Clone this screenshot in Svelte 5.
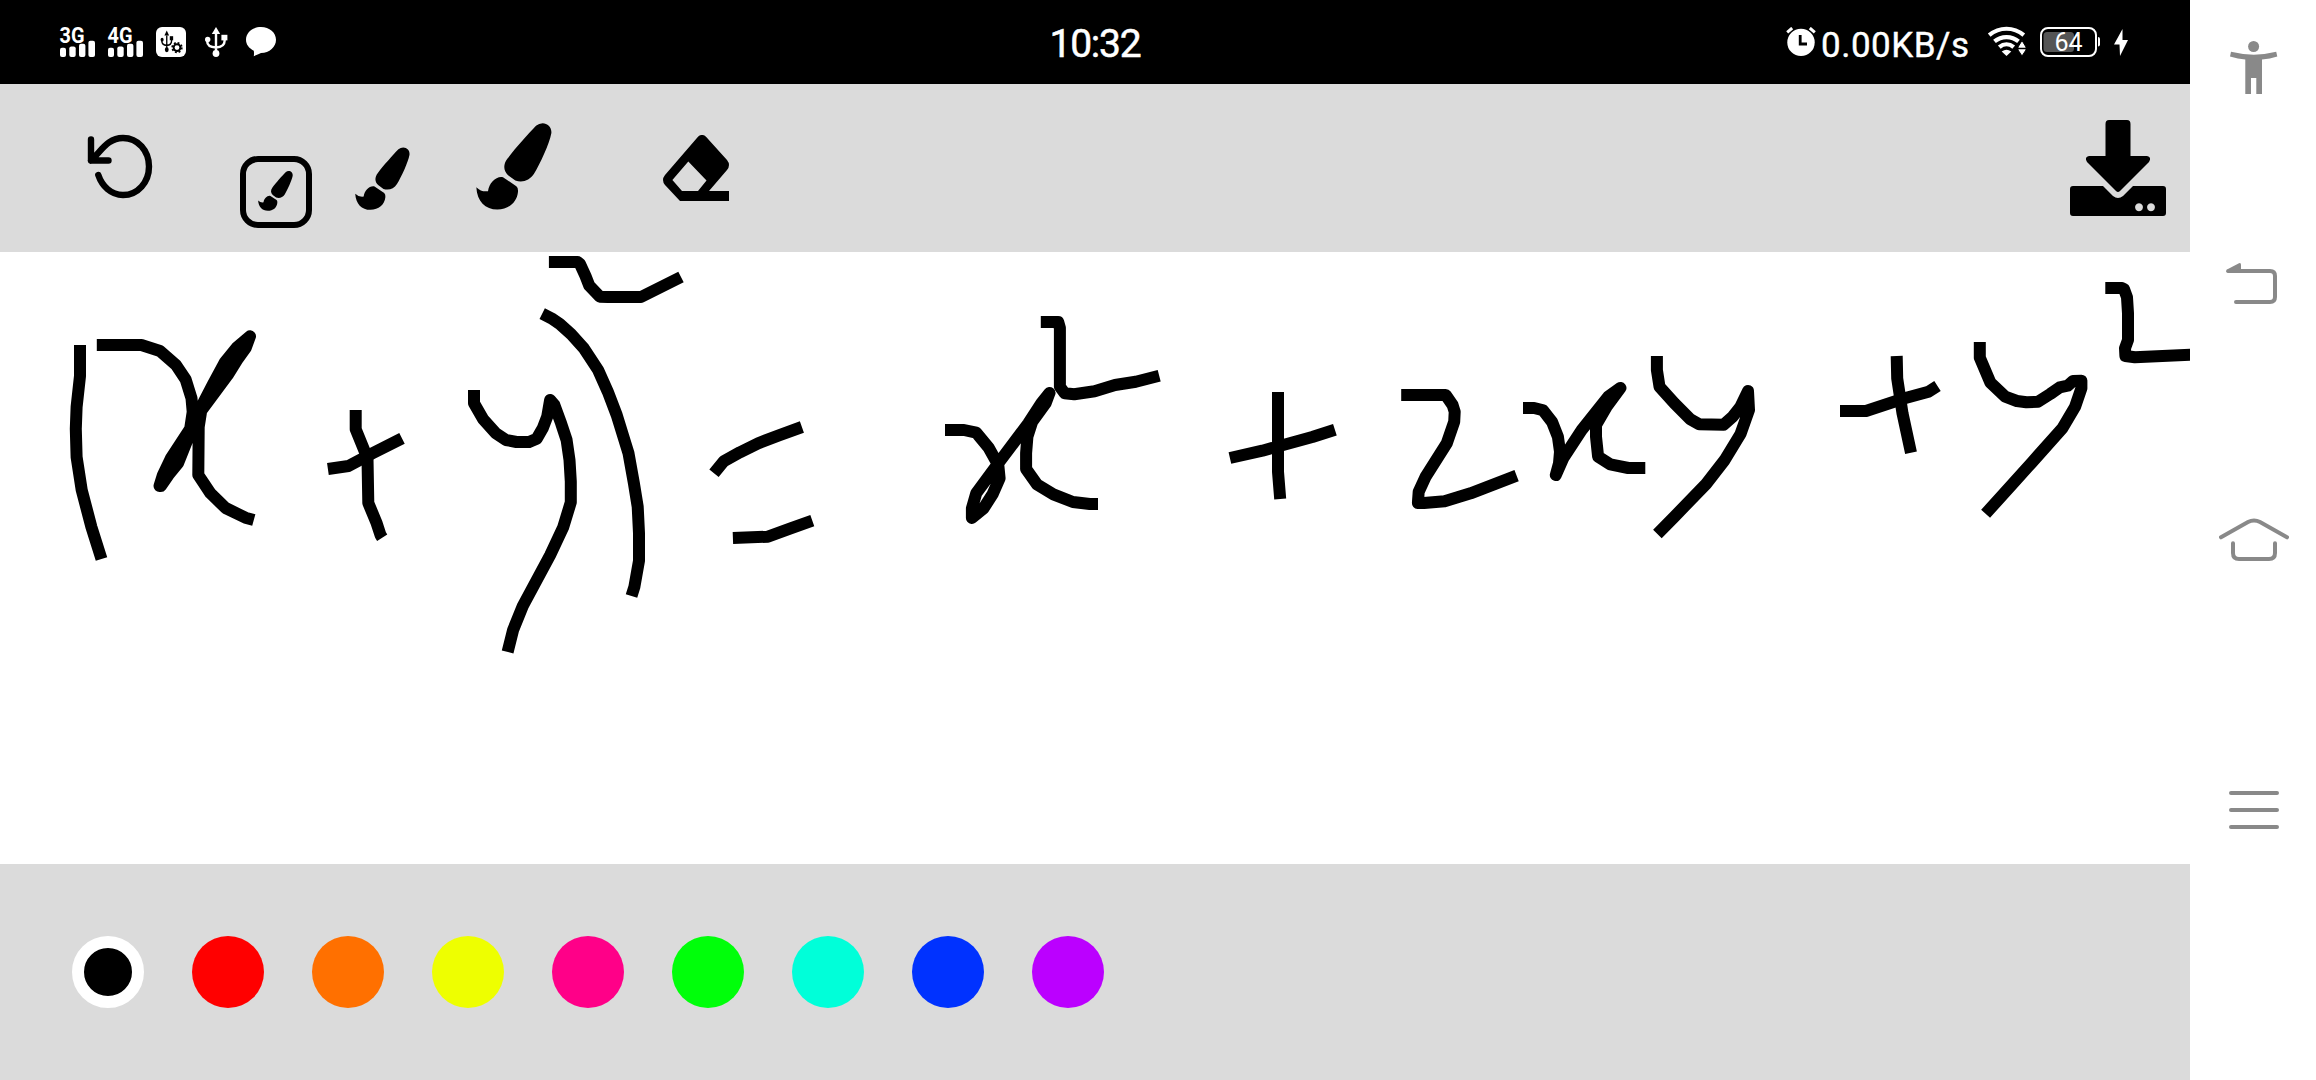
<script>
  const colors = ['#000000', '#ff0000', '#ff7000', '#eeff00', '#ff0088', '#00ff0a', '#00ffd9', '#0032ff', '#bb00ff'];
  let selected = $state(0);
  let brush = $state(0);

  // Pen strokes in canvas pixels, grouped by symbol
  const strokes = [
    // (x + y)^2
    '80,93 80,124 76.6,155 75.8,177 76.6,205 81.7,238 91.4,275 101.5,307',
    '96.8,93 141.4,93 160,99 176,113 185.6,127.3 191.5,146.3 192.7,160 190,178 186.5,190 178,211.3 168.4,223 160.8,234 159.5,234 162.9,223 170.9,206.3 191.5,174.7 203.7,150.3 212.6,133 225.2,109.7 237,95.3 250,84.3 245.8,95.7 237,108 227.7,123 201.2,158.7 198.7,174.7 198.3,223 210.5,241.3 225.6,256 245.4,265.7 253.8,268',
    '355.7,158 355.7,177.3 367.5,206.3 368.3,251 376.7,271.3 380.5,283 382.2,285.7',
    '327.9,217 348.5,214 372.5,201.3 402,186.3',
    '474,138 474,151.3 483.2,167.3 495.8,181.3 506,188 516.5,190 529.1,190 536.7,186.7 543,175.7 547.2,164.7 550.1,148 554.4,153 561.1,171.3 566.6,188 569.5,208 570.8,229.7 570.8,250.3 563.2,275.3 550.2,303 522.8,354 513.1,378 507.6,400',
    '542.2,61.7 551.4,66.3 559.8,72 571.2,82.3 583.8,96.3 598.1,118 607.8,139.7 616.7,163 628.5,201.3 633.9,231.3 637.7,254.7 639,281.3 639,308.7 634.4,334.7 631.5,344',
    '548.9,10 577.5,10 580,12 585.5,24 589.3,33.7 599.8,44.7 608,45 641,45 663,34 681,25',
    // =
    '714,221.3 723.8,209.3 739.9,200.3 758.1,191.3 778.9,183.3 801.9,175',
    '732.9,286 768,284.7 790.6,276.3 812.3,268.7',
    // x^2
    '945,178 964,178 976.2,180.7 988.4,195.3 998.3,213 999.6,226.3 992.7,242 983.6,256.3 971.9,266 971.9,256.3 976.2,241.3 998.3,211.3 1028.3,171.3 1041.3,151.3 1049.5,141 1045.6,151.3 1032.2,169.7 1027.4,184.7 1026.1,201.3 1026.1,217 1036.9,232.3 1053.4,242.3 1072.9,250 1089.8,252 1098,252',
    '1040.8,70 1058.2,70 1059.9,76 1059.9,134.7 1064.7,141.3 1074.2,142.3 1094.6,139.3 1115,133 1135.8,129.7 1159.2,123.7',
    // + 2xy
    '1278,140 1278,219.7 1280.2,247',
    '1229.9,206 1262.4,198.7 1312.3,185 1334.9,177.7',
    '1401.2,143 1445.7,143 1452.6,153 1454.7,159.7 1454.2,169.7 1446.8,191.3 1425.6,224.7 1418.7,239.7 1417.9,251 1424,251 1444.6,249.3 1470.6,241.3 1516.6,223.7',
    '1523,156 1534.1,156 1543.1,158.3 1552.1,170 1557.9,184.7 1560,199.7 1559,211.3 1555.8,223 1563.2,206.3 1581.7,178 1608.2,144.7 1620.4,136 1606.6,154.7 1596,173 1596,184.7 1598.1,204.7 1610.3,212.3 1628.3,216 1645.3,216',
    '1656.9,104 1656.9,118 1659.5,134.7 1674.4,151.3 1690.3,167.3 1699.2,172.3 1723.6,172.7 1732.6,164.7 1740.5,154.7 1748,139 1749,158 1740.5,182 1724.7,208 1706.1,232 1674.4,264.7 1657.4,282',
    // + y^2
    '1896.7,104 1897.2,126.3 1902.5,161.3 1911,200.7',
    '1840,159 1866,159 1904.6,146.3 1928.5,139.7 1937.5,134',
    '1979.8,90 1979.8,105.7 1990.4,130.7 2005.2,144.7 2016.9,149 2026.4,150.3 2038,149.7 2050.2,142 2059.7,135.3 2067.7,133.7 2073,129 2081.4,128.7 2081.4,136.3 2075.1,154.7 2062.4,176.3 2031.7,210.7 2011.6,233 1985.6,261.7',
    '2105.3,36 2122,36 2124,37 2127,45.3 2128,61.3 2128,88 2125,96.3 2125.4,104 2134.9,105.3 2192,102.6'
  ];
</script>

{#snippet signal(label)}
  <svg class="signal" viewBox="0 0 36 30">
    <text x="-0.5" y="15.5" textLength="25" lengthAdjust="spacingAndGlyphs">{label}</text>
    <rect x="0" y="20.7" width="6" height="9.3" rx="2" />
    <rect x="9.3" y="19.5" width="6.4" height="10.5" rx="2" />
    <rect x="19" y="16.7" width="6.4" height="13.3" rx="2" />
    <rect x="28.4" y="13.7" width="6.6" height="16.3" rx="2" />
  </svg>
{/snippet}

{#snippet trident()}
  <path d="M11 7V24M2.2 13V14.5Q2.2 20 11 20.5Q19.6 20 19.6 14V11" fill="none" stroke="currentColor" stroke-width="2.4" />
  <path d="M11 0L15.2 7H6.8Z" />
  <rect x="16.4" y="7.8" width="6" height="5.6" />
  <circle cx="2.7" cy="12.5" r="2.7" />
  <circle cx="11" cy="26.5" r="3.4" />
{/snippet}

{#snippet brushIcon(size)}
  <svg class="brush {size}" viewBox="108 68 228 260">
    <path d="M308 68C323 68 336 80 334 98C328 130 300 190 282 220C269 240 247 248 226 240L204 224C190 211 189 192 202 175C227 142 265 100 288 76Q297 68 308 68Z" />
    <path d="M189 230L229 257Q235 262 234 274C231 306 206 327 172 327C136 327 111 302 109 260Q124 275 144 272C147 246 170 225 189 230Z" />
  </svg>
{/snippet}

<div class="screen">
  <div class="app">
    <header class="status">
      <div class="left">
        {@render signal('3G')}
        {@render signal('4G')}
        <svg class="debug" viewBox="0 0 30 30">
          <rect width="30" height="30" rx="6" fill="#fff" />
          <g class="dark" transform="translate(4.6 3.5) scale(.56 .73)">{@render trident()}</g>
          <circle cx="21" cy="20.6" r="6.6" fill="#fff" />
          <circle cx="21" cy="20.6" r="3.4" fill="none" stroke="#000" stroke-width="2" />
          <circle cx="21" cy="20.6" r="4.8" fill="none" stroke="#000" stroke-width="1.8" stroke-dasharray="1.9 1.87" />
        </svg>
        <svg class="usb" viewBox="0 0 23 30">{@render trident()}</svg>
        <svg class="bubble" viewBox="0 0 30 30">
          <path d="M15 0C23.5 0 30 5.6 30 12.8S23.5 26 15 26Q13 27 7.8 29.2Q8.2 26 7.8 23.7C3 21.3 0 17.5 0 12.8C0 5.6 6.5 0 15 0Z" />
        </svg>
      </div>
      <div class="time">10:32</div>
      <div class="right">
        <svg class="alarm" viewBox="0 0 30 30">
          <circle cx="15" cy="15.4" r="13.7" />
          <path d="M1.2 5.4L6.2 1M28.8 5.4L23.8 1" stroke="#fff" stroke-width="3" />
          <path d="M14.2 8V17H21" fill="none" stroke="#000" stroke-width="2.8" />
        </svg>
        <span class="rate">0.00KB/s</span>
        <svg class="wifi" viewBox="0 0 38 30">
          <g fill="none" stroke="#fff" stroke-width="4.2">
            <path d="M1.2 8.2C11.5 -.4 25.5 -.4 35.8 8.2" />
            <path d="M6.5 14.3C13.4 8.6 23.6 8.6 30.5 14.3" />
            <path d="M11.3 20.2C15.8 16.4 21.2 16.4 25.7 20.2" />
          </g>
          <path d="M13.7 24.5Q18.5 20.8 23.3 24.5L18.5 29Z" />
          <path d="M34 13.5L38 20V23L34 29L30 23V20Z" stroke="#000" stroke-width="1" />
          <path d="M30 21.5H38" stroke="#000" stroke-width="1.5" />
        </svg>
        <svg class="battery" viewBox="0 0 60 30">
          <rect x="3.5" y="5" width="30.5" height="20" rx="3.5" fill="#555" />
          <rect x="1" y="1" width="55" height="28" rx="7" fill="none" stroke="#fff" stroke-width="2" />
          <path d="M58 10Q60 10 60 12V17.5Q60 19.5 58 19.5Z" />
          <text x="28.5" y="24" text-anchor="middle">64</text>
        </svg>
        <svg class="bolt" viewBox="0 0 14 27"><path d="M8.5 0L0 15.5H5.5L6 27L14 11H8.5Z" /></svg>
      </div>
    </header>

    <div class="toolbar">
      <svg class="undo" viewBox="0 0 66 66">
        <path d="M4 5.5V26.5H21.5M4 26.5C15 16 21 4 36 4C51 4 62 17 62 32.5C62 48 51 61 36 61C24 61 15 52 11.3 41" />
      </svg>
      <button class="tool boxed" aria-label="Thin brush" onclick={() => (brush = 0)}>{@render brushIcon('small')}</button>
      <button class="tool mid" aria-label="Medium brush" onclick={() => (brush = 1)}>{@render brushIcon('medium')}</button>
      <button class="tool big" aria-label="Thick brush" onclick={() => (brush = 2)}>{@render brushIcon('large')}</button>
      <svg class="eraser" viewBox="0 0 66 66">
        <path fill-rule="evenodd" d="M35 1.8Q39 -2 43 1.8L64 25Q68 30 64 35L46 56H66V66H17L2 50Q-2 45 2 40ZM25.3 26.5L9.4 45L19 56H35L43.5 45.5Z" />
      </svg>
      <svg class="save" viewBox="0 0 96 96">
        <path d="M39 0H57Q60.5 0 60.5 4V36H77Q82 37 79 42L50 71Q48 73 46 71L17 42Q14 37 19 36H35.5V4Q35.5 0 39 0Z" />
        <path fill-rule="evenodd" d="M3 66H33L43 76Q48 80 53 76L63 66H93Q96 66 96 69V93Q96 96 93 96H3Q0 96 0 93V69Q0 66 3 66ZM69 83.2a4 4 0 1 0 .01 0ZM81 83.2a4 4 0 1 0 .01 0Z" />
      </svg>
    </div>

    <svg class="canvas" viewBox="0 0 2190 612">
      {#each strokes as points}<polyline {points} />{/each}
    </svg>

    <footer class="palette">
      {#each colors as color, i}
        <button class="swatch" class:selected={i === selected} style:--ink={color} aria-label="Colour {i + 1}" onclick={() => (selected = i)}></button>
      {/each}
    </footer>
  </div>

  <nav>
    <svg class="person" viewBox="0 0 48 53">
      <circle cx="23.6" cy="5.5" r="5.5" />
      <path d="M1 10.8Q24 16.5 46.2 10.8L47.3 15.4Q40 17.8 32 18.4V53H26.3V37H21V53H15.3V18.4Q8 17.8 0 15.4Z" />
    </svg>
    <svg class="back" viewBox="0 0 52 41">
      <path d="M3 8H44Q49 8 49 13V34Q49 39 44 39H10" />
      <path class="solid" d="M.5 6.8L13 .3Q15 -.5 15 2V10H2Q-.7 9.2 .5 6.8Z" />
    </svg>
    <svg class="home" viewBox="0 0 70 43">
      <path d="M2 19.3L29 4Q35 .8 41 4L68 19.3M14 25.3V35Q14 41 20 41H50Q56 41 56 35V25.3" />
    </svg>
    <svg class="menu" viewBox="0 0 50 38"><path d="M2 2H48M2 19H48M2 36H48" /></svg>
  </nav>
</div>

<style>
  :global(body) { margin: 0; background: #fff; }
  .screen { display: flex; width: 2316px; height: 1080px; overflow: hidden; background: #fff; font-family: Roboto, "Liberation Sans", sans-serif; }
  .app { display: flex; flex-direction: column; width: 2190px; }
  svg { display: block; flex: none; }
  button { padding: 0; border: 0; background: none; box-sizing: border-box; }

  .status { display: grid; grid-template-columns: 1fr auto 1fr; height: 84px; background: #000; color: #fff; fill: #fff; }
  .left, .right { display: flex; align-items: flex-start; padding-top: 27px; }
  .left { padding-left: 60px; }
  .signal { width: 36px; height: 30px; margin-right: 12px; overflow: visible; }
  .signal text { font-size: 22px; font-weight: 700; }
  .debug { width: 30px; height: 30px; }
  .dark { fill: #000; color: #000; }
  .usb { width: 23px; height: 30px; margin-left: 19px; }
  .bubble { width: 30px; height: 30px; margin-left: 18px; }
  .time { font-size: 39px; line-height: 89px; letter-spacing: -1.2px; -webkit-text-stroke: .5px #fff; }
  .right { justify-content: flex-end; padding-right: 62px; }
  .alarm { width: 30px; height: 30px; }
  .rate { width: 149px; margin: -8px 18px 0 5px; font-size: 35px; line-height: 54px; letter-spacing: .5px; white-space: nowrap; -webkit-text-stroke: .4px #fff; }
  .wifi { width: 38px; height: 30px; margin-right: 14px; overflow: visible; }
  .battery { width: 60px; height: 30px; margin-right: 14px; }
  .battery text { font-size: 25px; }
  .bolt { width: 14px; height: 27px; margin-top: 2px; }

  .toolbar { display: flex; align-items: flex-start; box-sizing: border-box; height: 168px; padding-right: 24px; background: #dbdbdb; }
  .undo { width: 66px; height: 66px; margin: 50px 0 0 87px; fill: none; stroke: #000; stroke-width: 6.4; stroke-linecap: round; stroke-linejoin: round; }
  .boxed { display: flex; width: 72px; height: 72px; margin: 72px 0 0 87px; padding: 9px 0 0 12px; border: 6px solid #000; border-radius: 18px; }
  .mid { margin: 63px 0 0 43px; }
  .big { margin: 39px 0 0 66px; }
  .small { width: 35px; height: 40px; }
  .medium { width: 55px; height: 63.5px; }
  .large { width: 76px; height: 87px; }
  .eraser { width: 66px; height: 66px; margin: 51px 0 0 111px; }
  .save { width: 96px; height: 96px; margin: 36px 0 0 auto; }

  .canvas { width: 2190px; height: 612px; fill: none; stroke: #000; stroke-width: 12; stroke-linejoin: round; }

  .palette { display: flex; align-items: center; gap: 48px; height: 216px; padding-left: 72px; background: #dbdbdb; }
  .swatch { width: 72px; height: 72px; border-radius: 50%; background: var(--ink); }
  .selected { border: 12px solid #fff; }

  nav { display: flex; flex-direction: column; width: 126px; fill: #898989; }
  .person { width: 48px; height: 53px; margin: 41px 0 0 40px; }
  .back { width: 52px; height: 41px; margin: 169px 0 0 36px; }
  .home { width: 70px; height: 43px; margin: 214px 0 0 29px; }
  .menu { width: 50px; height: 38px; margin: 230px 0 0 39px; }
  .back, .home, .menu { fill: none; stroke: #898989; stroke-width: 4; stroke-linecap: round; }
  .solid { fill: #898989; stroke: none; }
</style>
